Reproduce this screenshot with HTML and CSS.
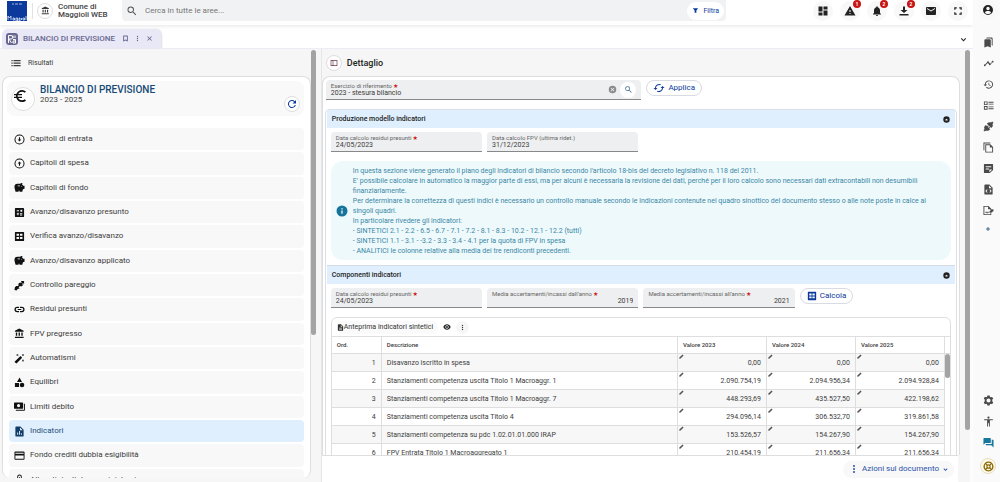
FILE: index.html
```html
<!DOCTYPE html>
<html lang="it">
<head>
<meta charset="utf-8">
<meta name="viewport" content="width=device-width, initial-scale=1">
<title>Bilancio di previsione</title>
<link rel="stylesheet" href="styles.css">
</head>
<body>
<svg class="sprite" aria-hidden="true">
  <symbol id="bank" viewBox="0 0 24 24"><path d="M4 10v7h3v-7H4zm6 0v7h3v-7h-3zM2 22h19v-3H2v3zm14-12v7h3v-7h-3zM11.500 1L2 6v2h19V6l-9.500-5z"/></symbol>
  <symbol id="search" viewBox="0 0 24 24"><path d="M15.500 14h-.79l-.28-.27A6.470 6.470 0 0 0 16 9.500 6.500 6.500 0 1 0 9.500 16c1.610 0 3.090-.59 4.230-1.570l.27.28v.79l5 4.990L20.490 19l-4.990-5zm-6 0C7.010 14 5 11.990 5 9.500S7.010 5 9.500 5 14 7.010 14 9.500 11.990 14 9.500 14z"/></symbol>
  <symbol id="filter" viewBox="0 0 24 24"><path d="M3 4h18l-6 8v8h-6v-8z"/></symbol>
  <symbol id="dashboard" viewBox="0 0 24 24"><path d="M3 13h8V3H3v10zm0 8h8v-6H3v6zm10 0h8V11h-8v10zm0-18v6h8V3h-8z"/></symbol>
  <symbol id="warning" viewBox="0 0 24 24"><path d="M1 21h22L12 2 1 21zm12-3h-2v-2h2v2zm0-4h-2v-4h2v4z"/></symbol>
  <symbol id="bell" viewBox="0 0 24 24"><path d="M12 22c1.100 0 2-.9 2-2h-4c0 1.100.9 2 2 2zm6-6v-5c0-3.070-1.640-5.640-4.500-6.320V4a1.500 1.500 0 0 0-3 0v.68C7.630 5.360 6 7.920 6 11v5l-2 2v1h16v-1l-2-2z"/></symbol>
  <symbol id="download" viewBox="0 0 24 24"><path d="M19 10h-5V3h-4v7H5l7 6 7-6zM3 18v3h18v-3H3z"/></symbol>
  <symbol id="mail" viewBox="0 0 24 24"><path d="M20 4H4c-1.100 0-2 .9-2 2v12c0 1.100.9 2 2 2h16c1.100 0 2-.9 2-2V6c0-1.100-.9-2-2-2zm0 4l-8 5-8-5V6l8 5 8-5v2z"/></symbol>
  <symbol id="fullscreen" viewBox="0 0 24 24"><path d="M3 3h6v3H6v3H3zM15 3h6v6h-3V6h-3zM3 15h3v3h3v3H3zM18 15h3v6h-6v-3h3z"/></symbol>
  <symbol id="person" viewBox="0 0 24 24"><path d="M12 2a10 10 0 1 0 0 20 10 10 0 0 0 0-20zm0 3.500a3.500 3.500 0 1 1 0 7 3.500 3.500 0 0 1 0-7zM12 20c-2.500 0-4.800-1.200-6.200-3.100.9-1.800 4.200-2.700 6.200-2.700s5.300.9 6.200 2.700A7.800 7.800 0 0 1 12 20z"/></symbol>
  <symbol id="bookmark" viewBox="0 0 24 24"><path d="M18 2H6a2 2 0 0 0-2 2v18l8-3 8 3V4a2 2 0 0 0-2-2zm-1 15.500l-5-2-5 2V5h10v12.500z"/></symbol>
  <symbol id="more" viewBox="0 0 24 24"><circle cx="12" cy="5" r="2.400"/><circle cx="12" cy="12" r="2.400"/><circle cx="12" cy="19" r="2.400"/></symbol>
  <symbol id="close" viewBox="0 0 24 24"><path d="M20 6l-2-2-6 6-6-6-2 2 6 6-6 6 2 2 6-6 6 6 2-2-6-6z"/></symbol>
  <symbol id="chevron" viewBox="0 0 24 24"><path d="M7 8l5 5 5-5 2 2-7 7-7-7z"/></symbol>
  <symbol id="list" viewBox="0 0 24 24"><path d="M1 5h3v3H1zM1 11h3v3H1zM1 17h3v3H1zM6 5h17v3H6zM6 11h17v3H6zM6 17h17v3H6z"/></symbol>
  <symbol id="euro" viewBox="0 0 24 24"><path d="M15 18.500A6.480 6.480 0 0 1 9.240 15H15v-2H8.580a6 6 0 0 1 0-2H15V9H9.240A6.490 6.490 0 0 1 15 5.500c1.610 0 3.090.59 4.230 1.570L21 5.300A8.960 8.960 0 0 0 15 3c-3.920 0-7.240 2.510-8.480 6H3v2h3.060a8.300 8.300 0 0 0 0 2H3v2h3.520A9 9 0 0 0 15 21c2.310 0 4.410-.87 6-2.300l-1.780-1.770A6.400 6.400 0 0 1 15 18.500z"/></symbol>
  <symbol id="refresh" viewBox="0 0 24 24"><path d="M17.650 6.350A8 8 0 1 0 19.730 14h-2.080A6 6 0 1 1 12 6c1.660 0 3.140.69 4.220 1.780L13 11h7V4l-2.350 2.350z"/></symbol>
  <symbol id="down" viewBox="0 0 24 24"><path d="M12 1a11 11 0 1 0 0 22 11 11 0 0 0 0-22zm0 2.200a8.800 8.800 0 1 1 0 17.600 8.800 8.800 0 0 1 0-17.600zM10.800 7v5H8l4 4.500 4-4.500h-2.800V7z"/></symbol>
  <symbol id="up" viewBox="0 0 24 24"><path d="M12 1a11 11 0 1 0 0 22 11 11 0 0 0 0-22zm0 2.200a8.800 8.800 0 1 1 0 17.600 8.800 8.800 0 0 1 0-17.600zM10.800 17v-5H8l4-4.500 4 4.500h-2.800v5z"/></symbol>
  <symbol id="piggy" viewBox="0 0 24 24"><path fill-rule="evenodd" d="M20 8l-2.300-2.300c.1-.8.300-1.600.6-2.200A1 1 0 0 0 17.300 2c-1.700 0-3.200.8-4.100 2H7.500A6.500 6.500 0 0 0 1 10.500C1 14 3.500 21 3.500 21H10v-2h2v2h6l1.500-5.200L23 14.500V8h-3zM13 9.500H8v-2h5v2zm3 1.500a1 1 0 1 1 0-2 1 1 0 0 1 0 2z"/></symbol>
  <symbol id="calc" viewBox="0 0 24 24"><path fill-rule="evenodd" d="M4 2h16a2 2 0 0 1 2 2v16a2 2 0 0 1-2 2H4a2 2 0 0 1-2-2V4c0-1.100.9-2 2-2zm2 5v2.200h5V7H6zm8-1v4.500h4V6h-4zM6 14v2h1.500v2h2v-2H11v-2H9.500v-1.500h-2V14H6zm7-.5v1.800h5v-1.800h-5zm0 3v1.800h5v-1.800h-5z"/></symbol>
  <symbol id="grid" viewBox="0 0 24 24"><path fill-rule="evenodd" d="M3 2h18l1 1v18l-1 1H3l-1-1V3zM5.500 6v4.500H11V6zM13 6v4.500h5.500V6zM5.500 13v4.500H11V13zM13 13v4.500h5.500V13z"/></symbol>
  <symbol id="arrows" viewBox="0 0 24 24"><path d="M22 2v7l-2.200-2.200-3 3H21l-4 4h-5l-2 3 3 1-5 2-2.500 3L1 22l1-6 3-3h4l2-3H8l4-4h5L15 2z"/></symbol>
  <symbol id="link" viewBox="0 0 24 24"><path d="M3.900 12A3.100 3.100 0 0 1 7 8.900h4V6H7a6 6 0 0 0 0 12h4v-2.900H7A3.100 3.100 0 0 1 3.900 12zM8 13.200h8v-2.400H8v2.400zM17 6h-4v2.900h4a3.100 3.100 0 0 1 0 6.200h-4V18h4a6 6 0 0 0 0-12z"/></symbol>
  <symbol id="wand" viewBox="0 0 24 24"><path d="M7.500 5.600L10 7 8.600 4.500 10 2 7.500 3.400 5 2l1.400 2.500L5 7zM19.500 15.400L17 14l1.400 2.500L17 19l2.500-1.400L22 19l-1.400-2.500L22 14zM22 2l-2.500 1.400L17 2l1.400 2.500L17 7l2.500-1.400L22 7l-1.400-2.500zM13.600 7.300a1 1 0 0 1 1.400 0L17.300 9.600a1 1 0 0 1 0 1.400L6 22.300a1 1 0 0 1-1.400 0L1.700 20a1 1 0 0 1 0-1.400z"/></symbol>
  <symbol id="shapes" viewBox="0 0 24 24"><path d="M12 1L6.500 11h11zM2 13h9v9H2z"/><circle cx="17.500" cy="17.500" r="5"/></symbol>
  <symbol id="money" viewBox="0 0 24 24"><path fill-rule="evenodd" d="M2 3h16a2 2 0 0 1 2 2v10a2 2 0 0 1-2 2H2a2 2 0 0 1-2-2V5c0-1.100.9-2 2-2zm8 3.500a3.500 3.500 0 1 0 0 7 3.500 3.500 0 0 0 0-7zM22 6h2v13a2 2 0 0 1-2 2H4v-2h18z"/></symbol>
  <symbol id="chartdoc" viewBox="0 0 24 24"><path fill-rule="evenodd" d="M14 1H5a2 2 0 0 0-2 2v18c0 1.100.9 2 2 2h14a2 2 0 0 0 2-2V8zM9 19H7v-5h2zm4 0h-2v-8h2zm4 0h-2v-3h2zM13 9V3l6 6z"/></symbol>
  <symbol id="card" viewBox="0 0 24 24"><path fill-rule="evenodd" d="M3 3h18a2 2 0 0 1 2 2v14a2 2 0 0 1-2 2H3a2 2 0 0 1-2-2V5c0-1.100.9-2 2-2zm0 3v2h18V6zm0 6v7h18v-7z"/></symbol>
  <symbol id="clip" viewBox="0 0 24 24"><path d="M7 22V6a5 5 0 0 1 10 0v12h-2V6a3 3 0 0 0-6 0v16zM11 7h2v15h-2z"/></symbol>
  <symbol id="columns" viewBox="0 0 24 24"><path fill-rule="evenodd" d="M2 3h20v18H2zm2 2v14h4V5zm6 0v14h10V5z"/></symbol>
  <symbol id="cancel" viewBox="0 0 24 24"><path fill-rule="evenodd" d="M12 2a10 10 0 1 0 0 20 10 10 0 0 0 0-20zm5 13.600L15.600 17 12 13.400 8.400 17 7 15.600l3.600-3.600L7 8.400 8.400 7l3.600 3.600L15.600 7 17 8.400 13.400 12z"/></symbol>
  <symbol id="sync" viewBox="0 0 24 24"><path d="M19 8l-4 4h3a6 6 0 0 1-8.800 5.300l-1.500 1.500A8 8 0 0 0 20 12h3zM6 12a6 6 0 0 1 8.800-5.300l1.500-1.500A8 8 0 0 0 4 12H1l4 4 4-4z"/></symbol>
  <symbol id="collapse" viewBox="0 0 24 24"><path fill-rule="evenodd" d="M12 1a11 11 0 1 0 0 22 11 11 0 0 0 0-22zM8 13l4-4 4 4v2H8z"/></symbol>
  <symbol id="info" viewBox="0 0 24 24"><path fill-rule="evenodd" d="M12 1a11 11 0 1 0 0 22 11 11 0 0 0 0-22zm1.300 16.500h-2.600V11h2.600zm0-8.500h-2.600V6.400h2.600z"/></symbol>
  <symbol id="doc" viewBox="0 0 24 24"><path fill-rule="evenodd" d="M14 1H5a2 2 0 0 0-2 2v18c0 1.100.9 2 2 2h14a2 2 0 0 0 2-2V8zm3 18H7v-2h10zm0-4H7v-2h10zM13 9V3l6 6z"/></symbol>
  <symbol id="eye" viewBox="0 0 24 24"><path fill-rule="evenodd" d="M12 4C7 4 2.700 7.300 1 12c1.700 4.700 6 8 11 8s9.300-3.300 11-8c-1.700-4.700-6-8-11-8zm0 13a5 5 0 1 1 0-10 5 5 0 0 1 0 10zm0-8a3 3 0 1 0 0 6 3 3 0 0 0 0-6z"/></symbol>
  <symbol id="pencil" viewBox="0 0 24 24"><path d="M1 23l2-7L17 2l5 5L8 21z"/></symbol>
  <symbol id="bookmarks" viewBox="0 0 24 24"><path d="M19 18l2 1V3a2 2 0 0 0-2-2H9a2 2 0 0 0-2 2h10a2 2 0 0 1 2 2zM15 5H5a2 2 0 0 0-2 2v16l7-3 7 3V7a2 2 0 0 0-2-2z"/></symbol>
  <symbol id="trend" viewBox="0 0 24 24"><path d="M23 8a2 2 0 0 1-2.500 1.900l-3.600 3.600A2 2 0 1 1 13 13.500L10.500 11 6 15.500a2 2 0 1 1-1.500-1.500L9 9.500a2 2 0 1 1 3.900 0l2.500 2.500h.9l3-3A2 2 0 1 1 23 8z"/></symbol>
  <symbol id="history" viewBox="0 0 24 24"><path d="M13 3a9 9 0 0 0-9 9H1l3.900 3.900L9 12H6a7 7 0 1 1 2.100 4.900l-1.500 1.500A9 9 0 1 0 13 3zm-1 5v5l4.300 2.500.7-1.200-3.500-2.100V8z"/></symbol>
  <symbol id="ballot" viewBox="0 0 24 24"><path fill-rule="evenodd" d="M2 3h8v8H2zm2 2v4h4V5zM2 13h8v8H2zm2 2v4h4v-4zM12 4h11v2H12zM12 8h11v2H12zM12 14h11v2H12zM12 18h11v2H12z"/></symbol>
  <symbol id="plug" viewBox="0 0 24 24"><path d="M20 1l3 3-2.500 2.500c1.500 2 1.300 5-.5 6.800L18 15.500 8.500 6l2.200-2C12.500 2.200 15.500 2 17.500 3.500zM6 8.500l3 3 2-2 1.500 1.500-2 2 1.500 1.500 2-2L15.500 14l-2 2 2 2-2.200 2c-1.800 1.800-4.800 2-6.800.5L4 23l-3-3 2.500-2.500C2 15.500 2.200 12.500 4 10.700z"/></symbol>
  <symbol id="copy" viewBox="0 0 24 24"><path fill-rule="evenodd" d="M1 1h15v2H3v15H1zM7 5h9l6 6v12H5V5zm0 2v14h13v-9h-5V7z"/></symbol>
  <symbol id="note" viewBox="0 0 24 24"><path fill-rule="evenodd" d="M3 2h18a1 1 0 0 1 1 1v12l-7 7H3a1 1 0 0 1-1-1V3a1 1 0 0 1 1-1zm3 5v2h12V7zm0 5v2h7v-2zm8 8l6-6h-6z"/></symbol>
  <symbol id="code" viewBox="0 0 24 24"><path fill-rule="evenodd" d="M14 1H5a2 2 0 0 0-2 2v18c0 1.100.9 2 2 2h14a2 2 0 0 0 2-2V8zM10 18l-1.300 1.300L5 15.500l3.700-3.800L10 13l-2.500 2.500zm5.300 1.300L14 18l2.500-2.500L14 13l1.300-1.300 3.700 3.800zM13 9V3l6 6z"/></symbol>
  <symbol id="signdoc" viewBox="0 0 24 24"><path fill-rule="evenodd" d="M1 2h11l6 6v3h-2V9h-5V4H3v16h13v-2h2v4H1zM5 16l2-2 2 2 2-2 2 2-1 1.500-1-1-2 2-2-2-1 1zM14 14l5-5 4 1v3l-5 4h-4z"/></symbol>
  <symbol id="plus" viewBox="0 0 24 24"><path d="M10 4h4v6h6v4h-6v6h-4v-6H4v-4h6z"/></symbol>
  <symbol id="gear" viewBox="0 0 24 24"><path fill-rule="evenodd" d="M9.500 1h5l.6 3 1.900 1.100 2.900-1L22.400 8l-2.200 2v4l2.200 2-2.500 4-2.900-1-1.900 1.100-.6 3h-5l-.6-3L7 19l-2.900 1-2.500-4 2.200-2v-4L1.600 8l2.500-4L7 5.100 8.900 4zM12 7.500a4.500 4.500 0 1 0 0 9 4.500 4.500 0 0 0 0-9z"/></symbol>
  <symbol id="access" viewBox="0 0 24 24"><circle cx="12" cy="3.500" r="2.500"/><path d="M21.500 9H15v14h-2v-7h-2v7H9V9H2.500V7h19z"/></symbol>
  <symbol id="chat" viewBox="0 0 24 24"><path d="M21 6h-2v9H6v2c0 .6.400 1 1 1h11l5 5V7a1 1 0 0 0-1-1zM17 12V3a1 1 0 0 0-1-1H2a1 1 0 0 0-1 1v14l4-4h11a1 1 0 0 0 1-1z"/></symbol>
  <symbol id="ring" viewBox="0 0 24 24"><circle cx="12" cy="12" r="9.500" fill="none" stroke="currentColor" stroke-width="3"/><circle cx="12" cy="12" r="3.500" fill="none" stroke="currentColor" stroke-width="2.500"/><path d="M4 6l2-2 5 5-2 2zM18 4l2 2-5 5-2-2zM9 13l2 2-5 5-2-2zM15 13l5 5-2 2-5-5z"/></symbol>
</svg>

<div class="app">
  <div class="main">
    <header class="topbar">
      <svg class="logo" viewBox="0 0 20 20" role="img" aria-label="Maggioli">
        <rect width="20" height="20" fill="#0b3a9c"/>
        <path d="M5 3h2M8 3h3M12 3h3" stroke="#9fb4e0"/>
        <path d="M1 19v-4l1.500 2L4 15v4M6 17h1.500v2H6zM9 17h1.500v3H9zM12 17h1v3h-1zM14.500 17v2M16 17h1.500v2H16zM19 15v4" fill="none" stroke="#dfe8ff" stroke-width=".8"/>
      </svg>
      <div class="entity">
        <span class="round bordered"><svg class="i9"><use href="#bank"/></svg></span>
        <strong class="entity-name">Comune di<br>Maggioli WEB</strong>
      </div>
      <div class="search">
        <svg class="i12"><use href="#search"/></svg>
        <input class="search-input" type="text" placeholder="Cerca in tutte le aree..." aria-label="Cerca in tutte le aree">
        <button class="filter" type="button"><svg class="i7"><use href="#filter"/></svg>Filtra</button>
      </div>
      <nav class="tools">
        <button class="tool" type="button" aria-label="Cruscotto"><svg class="i12"><use href="#dashboard"/></svg></button>
        <button class="tool" type="button" aria-label="Avvisi"><svg class="i12"><use href="#warning"/></svg><span class="badge">1</span></button>
        <button class="tool" type="button" aria-label="Notifiche"><svg class="i12"><use href="#bell"/></svg><span class="badge">2</span></button>
        <button class="tool" type="button" aria-label="Scarica"><svg class="i12"><use href="#download"/></svg><span class="badge">2</span></button>
        <button class="tool" type="button" aria-label="Posta"><svg class="i12"><use href="#mail"/></svg></button>
        <button class="tool" type="button" aria-label="Schermo intero"><svg class="i10"><use href="#fullscreen"/></svg></button>
      </nav>
    </header>

    <div class="tabs">
      <div class="tab">
        <svg class="tab-logo" viewBox="0 0 24 24"><rect width="24" height="24" rx="6" fill="#67678f"/><path d="M5 20V5h5a3 3 0 0 1 0 7H6l5 8M14 5v5M18 5v5M14 13h5v7h-5v-4h5" fill="none" stroke="#fff" stroke-width="2"/></svg>
        <span class="tab-title">BILANCIO DI PREVISIONE</span>
        <button class="bare" type="button" aria-label="Segnalibro"><svg class="i7"><use href="#bookmark"/></svg></button>
        <button class="bare" type="button" aria-label="Altro"><svg class="i7"><use href="#more"/></svg></button>
        <button class="bare" type="button" aria-label="Chiudi"><svg class="i7"><use href="#close"/></svg></button>
      </div>
      <button class="bare dark" type="button" aria-label="Elenco schede"><svg class="i9"><use href="#chevron"/></svg></button>
    </div>

    <div class="work">
      <section class="left">
        <div class="pane-title small"><svg class="i10"><use href="#list"/></svg>Risultati</div>
        <div class="card nav-card">
          <div class="summary">
            <span class="euro"><svg class="i16"><use href="#euro"/></svg></span>
            <div class="summary-text"><h1 class="summary-title">BILANCIO DI PREVISIONE</h1><p class="years">2023 - 2025</p></div>
            <button class="round bordered blue reload" type="button" aria-label="Aggiorna"><svg class="i12"><use href="#refresh"/></svg></button>
          </div>
          <ul class="menu">
            <li class="menu-item"><svg class="i11"><use href="#down"/></svg>Capitoli di entrata</li>
            <li class="menu-item"><svg class="i11"><use href="#up"/></svg>Capitoli di spesa</li>
            <li class="menu-item"><svg class="i11"><use href="#piggy"/></svg>Capitoli di fondo</li>
            <li class="menu-item"><svg class="i11"><use href="#calc"/></svg>Avanzo/disavanzo presunto</li>
            <li class="menu-item"><svg class="i11"><use href="#grid"/></svg>Verifica avanzo/disavanzo</li>
            <li class="menu-item"><svg class="i11"><use href="#piggy"/></svg>Avanzo/disavanzo applicato</li>
            <li class="menu-item"><svg class="i11"><use href="#arrows"/></svg>Controllo pareggio</li>
            <li class="menu-item"><svg class="i11"><use href="#link"/></svg>Residui presunti</li>
            <li class="menu-item"><svg class="i11"><use href="#bank"/></svg>FPV pregresso</li>
            <li class="menu-item"><svg class="i11"><use href="#wand"/></svg>Automatismi</li>
            <li class="menu-item"><svg class="i11"><use href="#shapes"/></svg>Equilibri</li>
            <li class="menu-item"><svg class="i11"><use href="#money"/></svg>Limiti debito</li>
            <li class="menu-item active"><svg class="i11"><use href="#chartdoc"/></svg>Indicatori</li>
            <li class="menu-item"><svg class="i11"><use href="#card"/></svg>Fondo crediti dubbia esigibilità</li>
            <li class="menu-item"><svg class="i11"><use href="#clip"/></svg>Allegati risultato amministrazione</li>
          </ul>
        </div>
      </section>
      <div class="track"><div class="thumb thumb-left"></div></div>

      <section class="right">
        <div class="detail">
          <div class="pane-title"><button class="round bordered maroon" type="button" aria-label="Mostra elenco"><svg class="i8"><use href="#columns"/></svg></button><h2 class="detail-title">Dettaglio</h2></div>
          <div class="card form-card">
            <div class="row">
              <div class="field wide">
                <div class="field-main">
                  <label class="label" for="year">Esercizio di riferimento<b class="req">★</b></label>
                  <input class="value" id="year" type="text" value="2023 - stesura bilancio">
                </div>
                <button class="bare grey" type="button" aria-label="Cancella"><svg class="i9"><use href="#cancel"/></svg></button>
                <button class="round white steel" type="button" aria-label="Cerca"><svg class="i9"><use href="#search"/></svg></button>
              </div>
              <button class="pill" type="button"><svg class="i12"><use href="#sync"/></svg>Applica</button>
            </div>

            <div class="accordion">
              <section class="panel">
                <h3 class="panel-head">Produzione modello indicatori<button class="bare dark" type="button" aria-label="Comprimi"><svg class="i7"><use href="#collapse"/></svg></button></h3>
                <div class="panel-body">
                  <div class="row">
                    <div class="field"><div class="field-main"><label class="label" for="d1">Data calcolo residui presunti<b class="req">★</b></label><input class="value" id="d1" type="text" value="24/05/2023"></div></div>
                    <div class="field"><div class="field-main"><label class="label" for="d2">Data calcolo FPV (ultima ridet.)</label><input class="value" id="d2" type="text" value="31/12/2023"></div></div>
                  </div>
                  <div class="info">
                    <svg class="i12"><use href="#info"/></svg>
                    <p class="info-text">In questa sezione viene generato il piano degli indicatori di bilancio secondo l'articolo 18-bis del decreto legislativo n. 118 del 2011.<br>E' possibile calcolare in automatico la maggior parte di essi, ma per alcuni è necessaria la revisione dei dati, perché per il loro calcolo sono necessari dati extracontabili non desumibili finanziariamente.<br>Per determinare la correttezza di questi indici è necessario un controllo manuale secondo le indicazioni contenute nel quadro sinottico del documento stesso o alle note poste in calce ai singoli quadri.<br>In particolare rivedere gli indicatori:<br>- SINTETICI 2.1 - 2.2 - 6.5 - 6.7 - 7.1 - 7.2 - 8.1 - 8.3 - 10.2 - 12.1 - 12.2 (tutti)<br>- SINTETICI 1.1 - 3.1 - -3.2 - 3.3 - 3.4 - 4.1 per la quota di FPV in spesa<br>- ANALITICI le colonne relative alla media dei tre rendiconti precedenti.</p>
                  </div>
                </div>
              </section>
              <section class="panel">
                <h3 class="panel-head">Componenti indicatori<button class="bare dark" type="button" aria-label="Comprimi"><svg class="i7"><use href="#collapse"/></svg></button></h3>
                <div class="panel-body">
                  <div class="row">
                    <div class="field"><div class="field-main"><label class="label" for="d3">Data calcolo residui presunti<b class="req">★</b></label><input class="value" id="d3" type="text" value="24/05/2023"></div></div>
                    <div class="field"><div class="field-main"><label class="label" for="y1">Media accertamenti/incassi dall'anno<b class="req">★</b></label><input class="value num" id="y1" type="text" value="2019"></div></div>
                    <div class="field"><div class="field-main"><label class="label" for="y2">Media accertamenti/incassi all'anno<b class="req">★</b></label><input class="value num" id="y2" type="text" value="2021"></div></div>
                    <button class="pill" type="button"><svg class="i10"><use href="#grid"/></svg>Calcola</button>
                  </div>
                  <div class="grid-box">
                    <div class="grid-bar">
                      <button class="chip" type="button"><svg class="i7"><use href="#doc"/></svg>Anteprima indicatori sintetici</button>
                      <button class="bare dark" type="button" aria-label="Vedi"><svg class="i8"><use href="#eye"/></svg></button>
                      <button class="dots" type="button" aria-label="Altro"><svg class="i7"><use href="#more"/></svg></button>
                    </div>
                    <div class="grid-scroll">
                      <table class="data">
                        <colgroup><col class="c-ord"><col><col class="c-val"><col class="c-val"><col class="c-val"><col class="c-bar"></colgroup>
                        <thead><tr><th>Ord.</th><th>Descrizione</th><th>Valore 2023</th><th>Valore 2024</th><th>Valore 2025</th><th></th></tr></thead>
                        <tbody>
                          <tr><td class="n">1</td><td>Disavanzo iscritto in spesa</td><td class="n e"><svg class="pen"><use href="#pencil"/></svg>0,00</td><td class="n e"><svg class="pen"><use href="#pencil"/></svg>0,00</td><td class="n e"><svg class="pen"><use href="#pencil"/></svg>0,00</td><td class="bar" rowspan="6"><div class="grid-thumb"></div></td></tr>
                          <tr><td class="n">2</td><td>Stanziamenti competenza uscita Titolo 1 Macroaggr. 1</td><td class="n e"><svg class="pen"><use href="#pencil"/></svg>2.090.754,19</td><td class="n e"><svg class="pen"><use href="#pencil"/></svg>2.094.956,34</td><td class="n e"><svg class="pen"><use href="#pencil"/></svg>2.094.928,84</td></tr>
                          <tr><td class="n">3</td><td>Stanziamenti competenza uscita Titolo 1 Macroaggr. 7</td><td class="n e"><svg class="pen"><use href="#pencil"/></svg>448.293,69</td><td class="n e"><svg class="pen"><use href="#pencil"/></svg>435.527,50</td><td class="n e"><svg class="pen"><use href="#pencil"/></svg>422.198,62</td></tr>
                          <tr><td class="n">4</td><td>Stanziamenti competenza uscita Titolo 4</td><td class="n e"><svg class="pen"><use href="#pencil"/></svg>294.096,14</td><td class="n e"><svg class="pen"><use href="#pencil"/></svg>306.532,70</td><td class="n e"><svg class="pen"><use href="#pencil"/></svg>319.861,58</td></tr>
                          <tr><td class="n">5</td><td>Stanziamenti competenza su pdc 1.02.01.01.000 IRAP</td><td class="n e"><svg class="pen"><use href="#pencil"/></svg>153.526,57</td><td class="n e"><svg class="pen"><use href="#pencil"/></svg>154.267,90</td><td class="n e"><svg class="pen"><use href="#pencil"/></svg>154.267,90</td></tr>
                          <tr><td class="n">6</td><td>FPV Entrata Titolo 1 Macroaggregato 1</td><td class="n e"><svg class="pen"><use href="#pencil"/></svg>210.454,19</td><td class="n e"><svg class="pen"><use href="#pencil"/></svg>211.656,34</td><td class="n e"><svg class="pen"><use href="#pencil"/></svg>211.656,34</td></tr>
                        </tbody>
                      </table>
                    </div>
                  </div>
                </div>
              </section>
            </div>
          </div>
          <footer class="actions"><button class="action" type="button"><svg class="i10"><use href="#more"/></svg>Azioni sul documento<svg class="i7"><use href="#chevron"/></svg></button></footer>
        </div>
        <div class="track"><div class="thumb thumb-right"></div></div>
      </section>
    </div>
  </div>

  <aside class="rail">
    <button class="tool white" type="button" aria-label="Profilo"><svg class="i12"><use href="#person"/></svg></button>
    <div class="rail-group">
      <button class="bare" type="button" aria-label="Segnalibri"><svg class="i11"><use href="#bookmarks"/></svg></button>
      <button class="bare" type="button" aria-label="Andamento"><svg class="i11"><use href="#trend"/></svg></button>
      <button class="bare" type="button" aria-label="Cronologia"><svg class="i11"><use href="#history"/></svg></button>
      <button class="bare" type="button" aria-label="Attività"><svg class="i11"><use href="#ballot"/></svg></button>
      <button class="bare" type="button" aria-label="Connessioni"><svg class="i11"><use href="#plug"/></svg></button>
      <button class="bare" type="button" aria-label="Copia"><svg class="i11"><use href="#copy"/></svg></button>
      <button class="bare" type="button" aria-label="Note"><svg class="i11"><use href="#note"/></svg></button>
      <button class="bare" type="button" aria-label="Codice"><svg class="i11"><use href="#code"/></svg></button>
      <button class="bare" type="button" aria-label="Firma"><svg class="i11"><use href="#signdoc"/></svg></button>
      <button class="bare steel" type="button" aria-label="Aggiungi"><svg class="i6"><use href="#plus"/></svg></button>
    </div>
    <div class="rail-group bottom">
      <button class="bare" type="button" aria-label="Impostazioni"><svg class="i11"><use href="#gear"/></svg></button>
      <button class="bare" type="button" aria-label="Accessibilità"><svg class="i11"><use href="#access"/></svg></button>
      <button class="bare teal" type="button" aria-label="Chat"><svg class="i11"><use href="#chat"/></svg></button>
      <button class="round bordered gold" type="button" aria-label="Assistenza"><svg class="i11"><use href="#ring"/></svg></button>
    </div>
  </aside>
</div>
</body>
</html>
```
FILE: styles.css
```css
*, *::before, *::after { box-sizing: border-box; }
body { margin: 0; background: #fff; color: #3c3c3c; font: 8px/10px Roboto, "Liberation Sans", sans-serif; }
h1, h2, h3, p, ul { margin: 0; padding: 0; }
button, input { font: inherit; color: inherit; border: 0; padding: 0; margin: 0; background: none; }
svg { display: block; flex: none; fill: currentColor; }
.sprite { position: absolute; width: 0; height: 0; }

.i6 { width: 6px; height: 6px; }
.i7 { width: 7px; height: 7px; }
.i8 { width: 8px; height: 8px; }
.i9 { width: 9px; height: 9px; }
.i10 { width: 10px; height: 10px; }
.i11 { width: 11px; height: 11px; }
.i12 { width: 12px; height: 12px; }
.i16 { width: 16px; height: 16px; }

.app { display: flex; height: 100vh; overflow: hidden; }
.main { flex: 1; min-width: 0; display: flex; flex-direction: column; }

.bare { display: flex; align-items: center; justify-content: center; }
.dark { color: #222; }
.grey { color: #8b8b8b; }
.round { display: flex; align-items: center; justify-content: center; flex: none; width: 16px; height: 16px; border-radius: 50%; }
.bordered { background: #fff; border: 1px solid #dedede; }
.white { background: #fff; }
.blue { color: #0b3a9c; }
.maroon { color: #6b3a44; }

/* top bar */
.topbar { display: flex; align-items: center; height: 25px; padding: 0 5px 4px 7px; box-shadow: 0 1px 4px #e4e4e4; }
.logo { width: 20px; height: 20px; }
.entity { display: flex; align-items: center; gap: 5px; margin-left: 5px; padding-left: 4px; border-left: 1px solid #e2e2e2; }
.entity-name { width: 64px; font-weight: 500; line-height: 8px; color: #444; white-space: nowrap; }
.search { flex: 1; display: flex; align-items: center; height: 21px; padding: 0 2px 0 4px; background: #f1f2f4; border-radius: 0 0 4px 4px; color: #555; }
.search-input { flex: 1; min-width: 0; margin-left: 7px; outline: 0; }
.search-input::placeholder { color: #777; opacity: 1; }
.filter { display: flex; align-items: center; gap: 4px; height: 18px; padding: 0 5px; border-radius: 9px; background: #fff; color: #0b3a9c; font-size: 7px; }
.tools { display: flex; gap: 7px; margin-left: 87px; }
.tool { position: relative; display: flex; align-items: center; justify-content: center; width: 20px; height: 20px; border-radius: 50%; background: #f8f8f8; color: #222; }
.badge { position: absolute; top: -1px; right: -1px; width: 8px; height: 8px; border-radius: 50%; background: #c81414; color: #fff; font-size: 5px; font-weight: 700; line-height: 8px; }

/* tabs */
.tabs { display: flex; align-items: flex-end; justify-content: space-between; height: 24px; padding: 0 5px 0 2px; border-bottom: 1px solid #ececf4; }
.tabs > .bare { height: 18px; }
.tab { display: flex; align-items: center; gap: 5px; height: 19px; padding: 0 8px 0 4px; border-radius: 6px 6px 0 0; background: #e9e8f6; color: #67678f; box-shadow: 1px 0 2px #ddd; }
.tab-logo { width: 12px; height: 12px; }
.tab-title { font-weight: 500; white-space: nowrap; margin-right: 2px; }

/* work area */
.work { flex: 1; min-height: 0; display: flex; background: #f6f6f6; }
.left { flex: 32 1 0; min-width: 0; display: flex; flex-direction: column; padding: 0 0 4px 2px; }
.right { flex: 68 1 0; min-width: 0; display: flex; }
.detail { flex: 1; min-width: 0; display: flex; flex-direction: column; margin-left: 4px; border-left: 1px solid #e6e6e6; }
.pane-title { display: flex; align-items: center; gap: 5px; flex: none; height: 27px; padding-left: 4px; }
.small { gap: 7px; padding-left: 9px; font-size: 7px; }
.detail-title { font-size: 9px; font-weight: 500; color: #222; }
.card { flex: 1; min-height: 0; background: #fff; border: 1px solid #dedede; border-radius: 8px; overflow: hidden; }
.track { flex: none; width: 6px; padding-top: 1px; }
.thumb { width: 5px; border-radius: 3px; background: #a3a3a3; }
.thumb-left { height: 66%; }
.thumb-right { height: 88%; }
.right .track { width: 8px; border-right: 3px solid #fcfcfc; }

/* navigation */
.nav-card { display: flex; flex-direction: column; padding: 4px 6px 0 4px; border-bottom: 0; }
.summary { display: flex; align-items: center; flex: none; height: 35px; padding: 0 4px; border-radius: 8px; background: #f9f9f9; }
.euro { width: 24px; height: 24px; border: 1px solid #dedede; border-radius: 50%; background: #fff; color: #111; }
.summary-text { flex: 1; padding: 0 0 8px 5px; }
.summary-title { font-size: 10px; line-height: 11px; font-weight: 500; color: #174a77; }
.years { line-height: 10px; color: #444; }
.reload { align-self: flex-end; margin-bottom: 4px; }
.menu { flex: 1; display: flex; flex-direction: column; gap: 2px; margin: 12px 0 -13px 2px; list-style: none; }
.menu-item { flex: 1; min-height: 20px; display: flex; align-items: center; gap: 5px; padding-left: 5px; border-radius: 4px; background: #f8f8f8; }
.menu-item svg { color: #111; }
.active { background: #e0effd; color: #1f4d78; }
.active svg { color: #123d68; }

/* form */
.form-card { margin-right: 5px; padding: 3px 2px 0; border-bottom: 0; border-radius: 8px 8px 0 0; }
.row { display: flex; align-items: flex-start; gap: 5px; }
.field { display: flex; align-items: center; width: calc((100% - 15px) / 4); height: 20px; padding: 0 5px; background: #eeeff0; border-bottom: 1px solid #888; border-radius: 4px 4px 0 0; }
.form-card > .row { padding-left: 1px; }
.wide { width: 50%; gap: 3px; }
.field-main { flex: 1; min-width: 0; }
.label { display: block; font-size: 6px; line-height: 7px; color: #666; white-space: nowrap; }
.req { margin-left: 1px; color: #d01c1c; font-family: "DejaVu Sans", sans-serif; line-height: 6px; }
.value { display: block; width: 100%; height: 8px; font-size: 7px; line-height: 8px; outline: 0; }
.num { text-align: right; }
.pill { display: flex; align-items: center; gap: 3px; height: 16px; padding: 0 6px; border: 1px solid #d8dbe2; border-radius: 8px; background: #fff; color: #0b3a9c; }

.accordion { margin-top: 9px; border: 1px solid #dcdfe6; border-radius: 4px; padding: 0 1px; }
.panel + .panel { border-top: 1px solid #d5dbe2; }
.panel-head { display: flex; align-items: center; justify-content: space-between; height: 18px; padding: 0 5px; background: #e0effd; font-size: 7px; font-weight: 500; color: #222; }
.panel-body { padding: 4px 4px 5px; }
.info { display: flex; align-items: center; gap: 5px; margin-top: 9px; padding: 5px 10px 4px 5px; border-radius: 12px; background: #eef9fc; color: #14749c; }
.info-text { font-size: 7px; line-height: 10px; color: #3a87a5; }

/* data grid */
.grid-box { margin-top: 9px; border: 1px solid #dedede; border-radius: 6px 6px 0 0; }
.grid-bar { display: flex; align-items: center; gap: 5px; height: 19px; padding-left: 5px; border-bottom: 1px solid #dedede; }
.chip { display: flex; align-items: center; font-size: 7px; color: #333; background: #fafafa; border-radius: 6px; height: 13px; padding-right: 5px; }
.dots { display: flex; align-items: center; justify-content: center; width: 13px; height: 13px; border-radius: 50%; background: #f6f6f6; }
.data { width: 100%; table-layout: fixed; border-collapse: separate; border-spacing: 0; font-size: 7px; }
.c-ord { width: 50px; }
.c-val { width: 89px; }
.c-bar { width: 5px; }
.data th { height: 17px; padding: 0 5px; text-align: left; font-size: 6px; font-weight: 500; white-space: nowrap; }
.data td { height: 18px; padding: 0 5px; white-space: nowrap; }
.data th, .data td { border-bottom: 1px solid #dedede; border-right: 1px solid #dedede; }
.data th:last-child { padding: 0; border-right: 0; }
.data tbody tr:nth-child(odd) { background: #f7f7f7; }
.data .n { text-align: right; }
.data .e { position: relative; }
.data .bar { padding: 0; border: 0; background: #fff; vertical-align: top; }
.pen { position: absolute; top: 0; left: 1px; width: 5px; height: 5px; color: #555; }
.grid-thumb { height: 24px; border-radius: 3px; background: #a3a3a3; }

.actions { flex: none; display: flex; align-items: center; justify-content: flex-end; height: 27px; padding-right: 4px; margin-right: 7px; background: #fff; border-top: 1px solid #dedede; }
.action { display: flex; align-items: center; gap: 3px; height: 17px; padding: 0 5px 0 6px; border-radius: 9px; background: #f8f8f8; color: #2a52a8; }

/* right rail */
.rail { flex: none; width: 27px; display: flex; flex-direction: column; align-items: center; padding: 0 0 8px 3px; background: #fafafa; color: #4a4a4a; }
.rail-group { display: flex; flex-direction: column; align-items: center; gap: 10px; margin-top: 17px; }
.bottom { margin-top: auto; gap: 10px; }
.steel { color: #3b6c94; }
.teal { color: #16789c; }
.gold { color: #8a6a0a; background: #fdf8e8; border-color: #e8dfc0; }
```
